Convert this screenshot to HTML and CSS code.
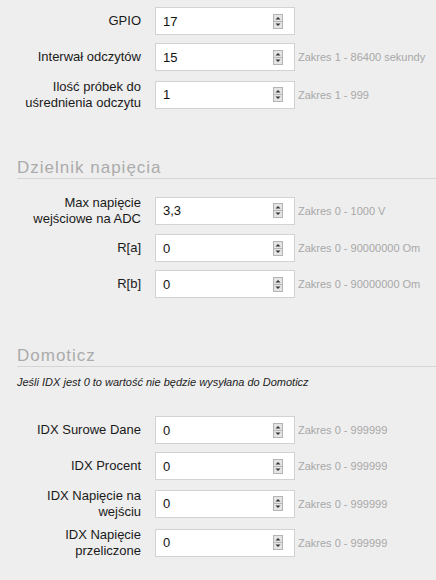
FILE: index.html
```html
<!DOCTYPE html>
<html lang="pl">
<head>
<meta charset="utf-8">
<link rel="stylesheet" href="styles.css">
</head>
<body>
<div class="page">
  <div class="row">
    <div class="label">GPIO</div>
    <div class="box"><span class="val">17</span><svg class="spin" width="10" height="15" viewBox="0 0 10 15"><rect x="0.5" y="0.5" width="9" height="14" fill="#e4e4e4" stroke="#b4b4b4"/><line x1="0.5" y1="7.5" x2="9.5" y2="7.5" stroke="#b4b4b4"/><polygon points="2.5,5.5 7.5,5.5 5,3" fill="#333"/><polygon points="2.5,9.5 7.5,9.5 5,12" fill="#333"/></svg></div>
  </div>
  <div class="row">
    <div class="label">Interwał odczytów</div>
    <div class="box"><span class="val">15</span><svg class="spin" width="10" height="15" viewBox="0 0 10 15"><rect x="0.5" y="0.5" width="9" height="14" fill="#e4e4e4" stroke="#b4b4b4"/><line x1="0.5" y1="7.5" x2="9.5" y2="7.5" stroke="#b4b4b4"/><polygon points="2.5,5.5 7.5,5.5 5,3" fill="#333"/><polygon points="2.5,9.5 7.5,9.5 5,12" fill="#333"/></svg></div>
    <div class="hint">Zakres 1 - 86400 sekundy</div>
  </div>
  <div class="row">
    <div class="label">Ilość próbek do<br>uśrednienia odczytu</div>
    <div class="box"><span class="val">1</span><svg class="spin" width="10" height="15" viewBox="0 0 10 15"><rect x="0.5" y="0.5" width="9" height="14" fill="#e4e4e4" stroke="#b4b4b4"/><line x1="0.5" y1="7.5" x2="9.5" y2="7.5" stroke="#b4b4b4"/><polygon points="2.5,5.5 7.5,5.5 5,3" fill="#333"/><polygon points="2.5,9.5 7.5,9.5 5,12" fill="#333"/></svg></div>
    <div class="hint">Zakres 1 - 999</div>
  </div>

  <h2 class="section">Dzielnik napięcia</h2>
  <div class="row first">
    <div class="label">Max napięcie<br>wejściowe na ADC</div>
    <div class="box"><span class="val">3,3</span><svg class="spin" width="10" height="15" viewBox="0 0 10 15"><rect x="0.5" y="0.5" width="9" height="14" fill="#e4e4e4" stroke="#b4b4b4"/><line x1="0.5" y1="7.5" x2="9.5" y2="7.5" stroke="#b4b4b4"/><polygon points="2.5,5.5 7.5,5.5 5,3" fill="#333"/><polygon points="2.5,9.5 7.5,9.5 5,12" fill="#333"/></svg></div>
    <div class="hint">Zakres 0 - 1000 V</div>
  </div>
  <div class="row">
    <div class="label">R[a]</div>
    <div class="box"><span class="val">0</span><svg class="spin" width="10" height="15" viewBox="0 0 10 15"><rect x="0.5" y="0.5" width="9" height="14" fill="#e4e4e4" stroke="#b4b4b4"/><line x1="0.5" y1="7.5" x2="9.5" y2="7.5" stroke="#b4b4b4"/><polygon points="2.5,5.5 7.5,5.5 5,3" fill="#333"/><polygon points="2.5,9.5 7.5,9.5 5,12" fill="#333"/></svg></div>
    <div class="hint">Zakres 0 - 90000000 Om</div>
  </div>
  <div class="row">
    <div class="label">R[b]</div>
    <div class="box"><span class="val">0</span><svg class="spin" width="10" height="15" viewBox="0 0 10 15"><rect x="0.5" y="0.5" width="9" height="14" fill="#e4e4e4" stroke="#b4b4b4"/><line x1="0.5" y1="7.5" x2="9.5" y2="7.5" stroke="#b4b4b4"/><polygon points="2.5,5.5 7.5,5.5 5,3" fill="#333"/><polygon points="2.5,9.5 7.5,9.5 5,12" fill="#333"/></svg></div>
    <div class="hint">Zakres 0 - 90000000 Om</div>
  </div>

  <h2 class="section">Domoticz</h2>
  <p class="note">Jeśli IDX jest 0 to wartość nie będzie wysyłana do Domoticz</p>
  <div class="row">
    <div class="label">IDX Surowe Dane</div>
    <div class="box"><span class="val">0</span><svg class="spin" width="10" height="15" viewBox="0 0 10 15"><rect x="0.5" y="0.5" width="9" height="14" fill="#e4e4e4" stroke="#b4b4b4"/><line x1="0.5" y1="7.5" x2="9.5" y2="7.5" stroke="#b4b4b4"/><polygon points="2.5,5.5 7.5,5.5 5,3" fill="#333"/><polygon points="2.5,9.5 7.5,9.5 5,12" fill="#333"/></svg></div>
    <div class="hint">Zakres 0 - 999999</div>
  </div>
  <div class="row">
    <div class="label">IDX Procent</div>
    <div class="box"><span class="val">0</span><svg class="spin" width="10" height="15" viewBox="0 0 10 15"><rect x="0.5" y="0.5" width="9" height="14" fill="#e4e4e4" stroke="#b4b4b4"/><line x1="0.5" y1="7.5" x2="9.5" y2="7.5" stroke="#b4b4b4"/><polygon points="2.5,5.5 7.5,5.5 5,3" fill="#333"/><polygon points="2.5,9.5 7.5,9.5 5,12" fill="#333"/></svg></div>
    <div class="hint">Zakres 0 - 999999</div>
  </div>
  <div class="row">
    <div class="label">IDX Napięcie na<br>wejściu</div>
    <div class="box"><span class="val">0</span><svg class="spin" width="10" height="15" viewBox="0 0 10 15"><rect x="0.5" y="0.5" width="9" height="14" fill="#e4e4e4" stroke="#b4b4b4"/><line x1="0.5" y1="7.5" x2="9.5" y2="7.5" stroke="#b4b4b4"/><polygon points="2.5,5.5 7.5,5.5 5,3" fill="#333"/><polygon points="2.5,9.5 7.5,9.5 5,12" fill="#333"/></svg></div>
    <div class="hint">Zakres 0 - 999999</div>
  </div>
  <div class="row">
    <div class="label">IDX Napięcie<br>przeliczone</div>
    <div class="box"><span class="val">0</span><svg class="spin" width="10" height="15" viewBox="0 0 10 15"><rect x="0.5" y="0.5" width="9" height="14" fill="#e4e4e4" stroke="#b4b4b4"/><line x1="0.5" y1="7.5" x2="9.5" y2="7.5" stroke="#b4b4b4"/><polygon points="2.5,5.5 7.5,5.5 5,3" fill="#333"/><polygon points="2.5,9.5 7.5,9.5 5,12" fill="#333"/></svg></div>
    <div class="hint">Zakres 0 - 999999</div>
  </div>
</div>
</body>
</html>
```

FILE: styles.css
```css
html, body {
  margin: 0;
  padding: 0;
  background: #eeeeee;
}
body {
  font-family: "Liberation Sans", Arial, sans-serif;
  color: #1a1a1a;
  width: 436px;
  height: 580px;
  overflow: hidden;
}
.page {
  padding: 7px 0 0 17px;
}
.row {
  display: flex;
  align-items: center;
  margin-bottom: 8px;
}
.label {
  width: 124px;
  text-align: right;
  font-size: 13px;
  line-height: 15.5px;
  margin-right: 14px;
}
.box {
  box-sizing: border-box;
  width: 140px;
  height: 28px;
  background: #fff;
  border: 1px solid #d2d2d2;
  display: flex;
  align-items: center;
  padding: 0 11px 0 7px;
}
.val {
  flex: 1;
  font-size: 13px;
  color: #111;
}
.spin {
  display: block;
  flex: none;
}
.hint {
  margin-left: 3px;
  font-size: 11px;
  color: #a8a8a8;
}
.section {
  margin: 49px 0 0 0;
  font-size: 17px;
  font-weight: normal;
  line-height: 18px;
  letter-spacing: 1px;
  color: #ababab;
  padding-bottom: 1px;
  border-bottom: 1px solid #d6d6d6;
}
.row.first {
  margin-top: 16px;
}
.note {
  margin: 9px 0 27px 0;
  font-size: 11px;
  line-height: 13px;
  font-style: italic;
  color: #222;
}
```
